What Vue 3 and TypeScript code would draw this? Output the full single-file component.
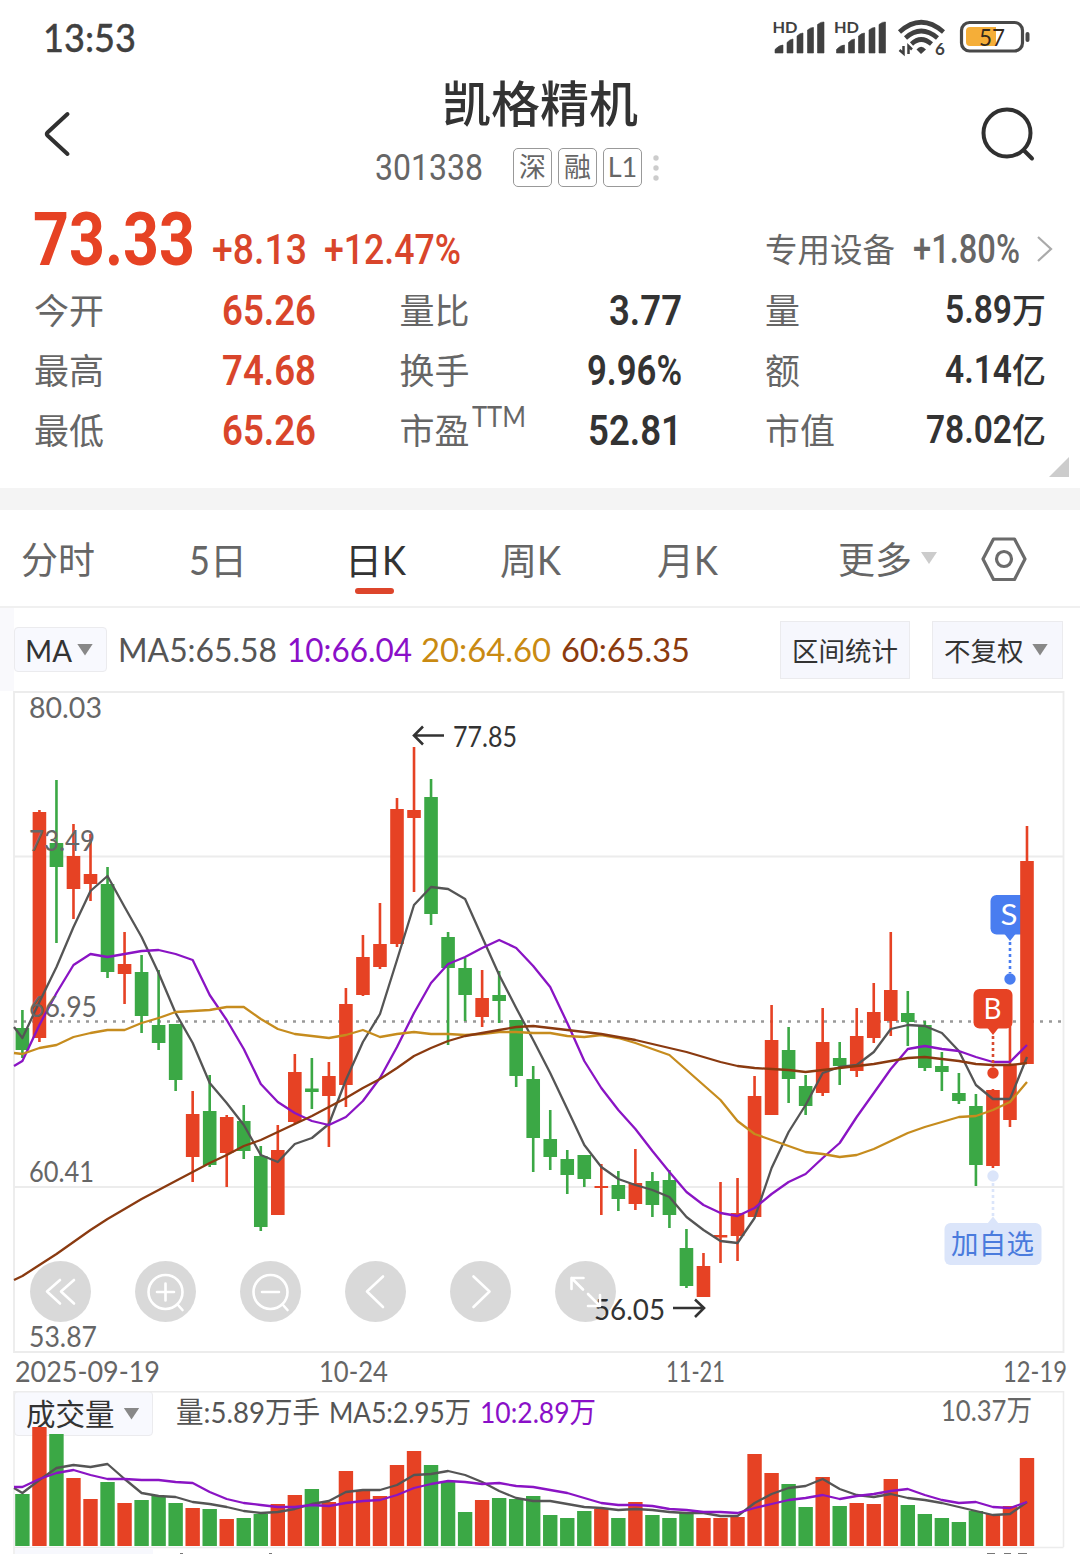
<script setup lang="ts">
type Direction = 'up' | 'down'
type Candle = [dir: Direction, high: number, top: number, bottom: number, low: number]

// Stretches or condenses a run of text to the given width in pixels.
const vFit = {
  mounted(el: HTMLElement, binding: { value: number }) {
    el.style.display = 'inline-block'
    el.style.whiteSpace = 'nowrap'
    const natural = el.getBoundingClientRect().width
    el.style.transformOrigin = '0 50%'
    el.style.transform = `scaleX(${binding.value / natural})`
    el.style.marginRight = `${binding.value - natural}px`
  },
}

const stats = [
  { label: '今开', value: '65.26', w: 94, tone: 'red' },
  { label: '量比', value: '3.77', w: 73, tone: '' },
  { label: '量', value: '5.89', w: 67, unit: '万', tone: 'small' },
  { label: '最高', value: '74.68', w: 94, tone: 'red' },
  { label: '换手', value: '9.96%', w: 95, tone: '' },
  { label: '额', value: '4.14', w: 67, unit: '亿', tone: 'small' },
  { label: '最低', value: '65.26', w: 94, tone: 'red' },
  { label: '市盈', sup: 'TTM', value: '52.81', w: 94, tone: '' },
  { label: '市值', value: '78.02', w: 86, unit: '亿', tone: 'small' },
]

const averages = [
  { text: 'MA5:65.58', w: 159, color: '#555' },
  { text: '10:66.04', w: 125, color: '#8a0fc8' },
  { text: '20:64.60', w: 130, color: '#c98a12' },
  { text: '60:65.35', w: 129, color: '#8b3a0e' },
]

const candles: Candle[] = [
  ['down', 1010, 1028, 1050, 1058], ['up', 810, 812, 1038, 1042], ['down', 780, 843, 867, 943],
  ['up', 824, 856, 889, 919], ['up', 834, 874, 884, 901], ['down', 867, 884, 972, 978],
  ['up', 932, 964, 974, 1004], ['down', 955, 972, 1016, 1033], ['down', 970, 1025, 1043, 1050],
  ['down', 1024, 1024, 1080, 1091], ['up', 1091, 1114, 1157, 1182], ['down', 1075, 1111, 1165, 1167],
  ['up', 1115, 1117, 1153, 1187], ['down', 1105, 1121, 1151, 1159], ['down', 1146, 1156, 1227, 1231],
  ['up', 1125, 1150, 1215, 1215], ['up', 1054, 1072, 1122, 1124], ['down', 1058, 1088.5, 1092, 1109],
  ['up', 1062, 1076, 1096, 1147], ['up', 988, 1004, 1085, 1107], ['up', 935, 957, 995, 996],
  ['up', 903, 944, 967, 969], ['up', 798, 809, 944, 947], ['up', 747, 810, 818, 892],
  ['down', 779, 797, 914, 925], ['down', 932, 937, 968, 1045], ['down', 958, 968, 995, 1021],
  ['up', 970, 998, 1017, 1027], ['down', 971, 995, 1001, 1023], ['down', 1020, 1020, 1076, 1087],
  ['down', 1066, 1079, 1138, 1172], ['down', 1110, 1139, 1157, 1170], ['down', 1150, 1159, 1175, 1194],
  ['down', 1155, 1155, 1179, 1187], ['up', 1164, 1186, 1188, 1215], ['down', 1171, 1185, 1199, 1211],
  ['up', 1149, 1183, 1204, 1210], ['down', 1172, 1181, 1205, 1217], ['down', 1170, 1180, 1215, 1228],
  ['down', 1229, 1248, 1286, 1288], ['up', 1253, 1266, 1297, 1297], ['up', 1182, 1235, 1237.5, 1263],
  ['up', 1178, 1213, 1236, 1261], ['up', 1076, 1096, 1217, 1217], ['up', 1005, 1040, 1115, 1115],
  ['down', 1027, 1050, 1079, 1103], ['down', 1075, 1086, 1106, 1115], ['up', 1008, 1042, 1093, 1096],
  ['down', 1042, 1058, 1066, 1085], ['up', 1008, 1036, 1071, 1077], ['up', 983, 1012, 1038, 1043],
  ['up', 932, 990, 1021, 1036], ['down', 991, 1013, 1022, 1046], ['down', 1021, 1025, 1068, 1071],
  ['down', 1052, 1066, 1072, 1091], ['down', 1073, 1093, 1101, 1104], ['down', 1094, 1106, 1165, 1186],
  ['up', 1089, 1090, 1166, 1168], ['up', 1020, 1065, 1120, 1127], ['up', 826, 861, 1064, 1064],
]

// The first value of every series is its level at the left border of the plot.
const ma5 = [1027, 1038, 1002, 967, 927, 891, 876, 907, 937, 973, 1013, 1043, 1083, 1103, 1125, 1155, 1162, 1144, 1138, 1124, 1080, 1042, 1014, 960, 905, 887, 889, 899, 937, 975, 1008, 1040, 1073, 1109, 1145, 1167, 1179, 1185, 1190, 1197, 1217, 1230, 1241, 1243, 1218, 1168, 1132, 1105, 1073, 1067, 1065, 1052, 1029, 1025, 1026, 1033, 1051, 1085, 1099, 1099, 1057]
const ma10 = [1066, 1061, 1025, 993, 965, 954, 957, 954, 951, 950, 954, 960, 995, 1020, 1049, 1084, 1102, 1113, 1121, 1125, 1117, 1101, 1078, 1047, 1013, 983, 964, 957, 948, 940, 948, 966, 987, 1023, 1061, 1088, 1110, 1129, 1151, 1172, 1192, 1205, 1213, 1216, 1208, 1194, 1182, 1174, 1158, 1143, 1117, 1093, 1069, 1049, 1046, 1049, 1051, 1057, 1062, 1062, 1045]
const ma20 = [1053, 1054, 1048, 1045, 1037, 1033, 1030, 1030, 1023, 1018, 1012, 1011, 1010, 1007, 1007, 1019, 1029, 1034, 1036, 1038, 1035, 1030, 1037, 1034, 1032, 1034, 1034, 1035, 1034, 1032, 1032, 1033, 1033, 1036, 1037, 1035, 1038, 1043, 1049, 1055, 1070, 1085, 1100, 1121, 1134, 1140, 1146, 1152, 1154, 1157, 1155, 1149, 1141, 1133, 1127, 1122, 1117, 1116, 1110, 1102, 1082]
const ma60 = [1280, 1276, 1265, 1254, 1242, 1230, 1219, 1209, 1199, 1190, 1181, 1172, 1163, 1155, 1146, 1140, 1132, 1124, 1116, 1107, 1098, 1088, 1079, 1068, 1056, 1048, 1041, 1036, 1033, 1030, 1027, 1026, 1028, 1030, 1032, 1034, 1037, 1040, 1044, 1048, 1052, 1057, 1062, 1066, 1068, 1069, 1070, 1072, 1070, 1068, 1066, 1064, 1061, 1058, 1057, 1059, 1061, 1064, 1065, 1065, 1063]

const volumes = [1494, 1427, 1434, 1478, 1499, 1482, 1503, 1500, 1496, 1503, 1508, 1509, 1519, 1518, 1514, 1504, 1495, 1489, 1502, 1471, 1490, 1496, 1465, 1451, 1465, 1482, 1512, 1500, 1498, 1499, 1496, 1515, 1518, 1511, 1509, 1518, 1502, 1515, 1518, 1513, 1518, 1518, 1517, 1454, 1473, 1484, 1507, 1477, 1506, 1503, 1504, 1479, 1505, 1514, 1518, 1522, 1511, 1514, 1506, 1458]
const volMa5 = [1488, 1493, 1480, 1468, 1465, 1467, 1464, 1479, 1493, 1496, 1497, 1502, 1504, 1507, 1511, 1513, 1512, 1509, 1504, 1501, 1492, 1490, 1490, 1485, 1475, 1474, 1471, 1475, 1482, 1491, 1498, 1501, 1501, 1504, 1507, 1508, 1510, 1509, 1510, 1512, 1513, 1513, 1516, 1516, 1503, 1494, 1488, 1486, 1479, 1489, 1495, 1497, 1494, 1498, 1500, 1503, 1507, 1511, 1515, 1514, 1502]
const volMa10 = [1487, 1487, 1479, 1473, 1470, 1475, 1479, 1479, 1480, 1480, 1482, 1483, 1492, 1499, 1503, 1505, 1507, 1507, 1505, 1506, 1503, 1501, 1500, 1495, 1488, 1484, 1481, 1482, 1484, 1483, 1486, 1487, 1490, 1493, 1498, 1503, 1505, 1505, 1506, 1509, 1510, 1512, 1512, 1513, 1508, 1504, 1500, 1498, 1495, 1499, 1496, 1494, 1491, 1489, 1495, 1500, 1503, 1502, 1507, 1508, 1502]

const cx = (i: number): number => 22.4 + i * 17.027
const tint = (d: Direction): string => (d === 'up' ? '#e64224' : '#3ba845')
const line = (s: number[]): string => s.map((y, i) => `${i === 0 ? 14 : cx(i - 1).toFixed(1)},${y}`).join(' ')

const priceLines = [
  { points: line(ma5), color: '#555' },
  { points: line(ma10), color: '#8a14c4' },
  { points: line(ma20), color: '#c68c1e' },
  { points: line(ma60), color: '#8a3a10' },
]
const volumeLines = [
  { points: line(volMa5), color: '#555' },
  { points: line(volMa10), color: '#8a14c4' },
]
const axis = [
  { t: '80.03', y: 717.5, w: 73 }, { t: '73.49', y: 850.5, w: 66 }, { t: '66.95', y: 1016.5, w: 68 },
  { t: '60.41', y: 1181.5, w: 65 }, { t: '53.87', y: 1346.5, w: 68 },
]
const lastCandle = candles.length - 1
</script>

<template>
  <div class="screen">
    <header class="status">
      <span v-fit="93" class="clock">13:53</span>
      <svg class="status-icons" width="262" height="46" viewBox="770 12 262 46">
        <g v-for="dx in [0, 61.5]" :key="dx" :transform="`translate(${dx} 0)`" fill="#404040">
          <text x="772.5" y="32.5" font-size="16" font-weight="700" textLength="25" lengthAdjust="spacingAndGlyphs">HD</text>
          <path d="M775 53V49.500Q779 45 783 45V53ZM787 53V42.500Q790 39 793 39V53ZM797 53V36Q800 33 803 33V53ZM807.500 53V30Q811 27 813.500 27.500V53ZM817.500 53V24.500Q821 21.500 824 22V53Z" stroke="#404040" stroke-width=".6" />
        </g>
        <g fill="none" stroke="#404040" stroke-width="4.600">
          <path d="M899.500 32Q921 12.500 943.500 32" />
          <path d="M905.500 38Q921 24 937.500 38" />
          <path d="M911.500 44Q921 35 931.500 44" />
        </g>
        <path d="M916.500 49.500Q921 44 926 49.500L921 54Z" fill="#404040" />
        <path d="M903.500 46v7.500l-4-3.500M908.500 54v-8l3.500 3.500" fill="none" stroke="#404040" stroke-width="2.500" />
        <text x="935" y="55" font-size="17" font-weight="700" fill="#404040">6</text>
        <rect x="961.500" y="22.500" width="61" height="28.500" rx="8" fill="none" stroke="#484848" stroke-width="3.200" />
        <path d="M970 27H996V46H970Q966 46 966 42V31Q966 27 970 27Z" fill="#f5ae38" />
        <rect x="1025.500" y="32" width="4" height="10" rx="2" fill="#484848" />
        <text x="979" y="46" font-size="24" fill="#33291c" textLength="26" lengthAdjust="spacingAndGlyphs">57</text>
      </svg>
    </header>

    <section class="head">
      <svg class="back" width="34" height="50" viewBox="0 0 34 50" fill="none" stroke="#303030" stroke-width="4" stroke-linecap="round" stroke-linejoin="round">
        <path d="M27.500 5L7.500 23.500Q6 25 7.500 26.500L27.500 45" />
      </svg>
      <div class="name">
        <h1>凯格精机</h1>
        <div class="code">
          <span v-fit="108" class="num">301338</span>
          <i v-for="t in ['深', '融', 'L1']" :key="t" class="tag">{{ t }}</i>
          <svg width="6" height="28" viewBox="0 0 6 28" fill="#ccc"><circle cx="3" cy="4" r="2.700" /><circle cx="3" cy="14" r="2.700" /><circle cx="3" cy="24" r="2.700" /></svg>
        </div>
      </div>
      <svg class="search" width="56" height="58" viewBox="0 0 56 58" fill="none" stroke="#303030" stroke-width="4" stroke-linecap="round">
        <circle cx="27" cy="28" r="23.500" /><path d="M44.500 46L52 53.500" />
      </svg>
    </section>

    <section class="quote">
      <div class="price">
        <span v-fit="162" class="num last">73.33</span>
        <span v-fit="95" class="num change">+8.13</span>
        <span v-fit="137" class="num change pct">+12.47%</span>
        <span class="sector">专用设备</span>
        <span v-fit="107" class="num sector-pct">+1.80%</span>
        <svg width="16" height="28" viewBox="0 0 16 28" fill="none" stroke="#aaa" stroke-width="2.200"><path d="M1 2L14 14L1 26" /></svg>
      </div>
      <div class="stats">
        <div v-for="s in stats" :key="s.label" class="stat">
          <span class="label">{{ s.label }}<sup v-if="s.sup" v-fit="54">{{ s.sup }}</sup></span>
          <span class="value" :class="s.tone"><b v-fit="s.w" class="num">{{ s.value }}</b><em v-if="s.unit">{{ s.unit }}</em></span>
        </div>
      </div>
      <i class="corner"></i>
    </section>

    <div class="band"></div>

    <nav class="tabs">
      <span class="t1">分时</span><span class="t2"><b v-fit="21">5</b>日</span><span class="t3 active">日<b v-fit="24">K</b></span>
      <span class="t4">周<b v-fit="24">K</b></span><span class="t5">月<b v-fit="24">K</b></span><span class="t6">更多</span>
      <i class="caret light"></i>
      <svg class="gear" width="46" height="46" viewBox="0 0 46 46" fill="none" stroke="#6b6b6b" stroke-width="3.200" stroke-linejoin="round">
        <path d="M12.500 3H33.500L44 23L33.500 43.500H12.500L2 23Z" /><circle cx="23" cy="23" r="7.500" />
      </svg>
    </nav>

    <section class="tools">
      <div class="pick ma"><span v-fit="47">MA</span><i class="caret"></i></div>
      <div class="avgs"><span v-for="a in averages" :key="a.text" v-fit="a.w" :style="{ color: a.color }">{{ a.text }}</span></div>
      <div class="btn range">区间统计</div>
      <div class="btn adjust">不复权<i class="caret"></i></div>
    </section>

    <section class="chart">
      <svg width="1080" height="662" viewBox="0 691 1080 662">
        <path d="M14 692H1063.500V1352H14ZM14 856.500H1063M14 1187H1063" fill="none" stroke="#ececec" stroke-width="1.800" />
        <path d="M14 1021.500H1063" stroke="#999" stroke-width="2.600" stroke-dasharray="3 6" />

        <g fill="#497df0">
          <rect x="990.500" y="895" width="39" height="39.500" rx="6" />
          <path d="M1004.500 934H1015.500L1010 941Z" /><circle cx="1010" cy="979" r="5.700" />
          <path d="M1010 942V973" stroke="#497df0" stroke-width="2.600" stroke-dasharray="3 3" />
        </g>
        <text x="1000.500" y="925" font-size="29" fill="#fff" textLength="17" lengthAdjust="spacingAndGlyphs">S</text>

        <g v-for="(c, i) in candles" :key="i" :fill="tint(c[0])">
          <rect :x="cx(i) - 1.300" :y="c[1]" width="2.600" :height="c[4] - c[1]" />
          <rect :x="cx(i) - 6.800" :y="c[2]" width="13.600" :height="c[3] - c[2]" />
        </g>
        <polyline v-for="l in priceLines" :key="l.color" :points="l.points" fill="none" :stroke="l.color" stroke-width="2.300" stroke-linejoin="round" />

        <g fill="#e64224">
          <rect x="973.500" y="989" width="39" height="39.500" rx="6" />
          <path d="M987.500 1028H998.500L993 1035Z" /><circle cx="993" cy="1073" r="5.700" />
          <path d="M993 1036V1067" stroke="#d84a30" stroke-width="2.600" stroke-dasharray="3 3" />
        </g>
        <text x="983.500" y="1019" font-size="28.500" fill="#fff" textLength="18" lengthAdjust="spacingAndGlyphs">B</text>

        <g fill="#dbe5fa">
          <circle cx="993" cy="1176" r="5.700" />
          <path d="M993 1183V1217" stroke="#dbe5fa" stroke-width="2.600" stroke-dasharray="3 3" />
          <path d="M987.500 1223.500L993 1216.500L998.500 1223.500Z" /><rect x="944.500" y="1223" width="97" height="42" rx="6" />
        </g>
        <text x="951" y="1253.500" font-size="27.500" fill="#4a7bdd" textLength="83">加自选</text>

        <g font-size="28.500" fill="#666">
          <text v-for="a in axis" :key="a.t" x="29" :y="a.y" :textLength="a.w" lengthAdjust="spacingAndGlyphs">{{ a.t }}</text>
        </g>
        <g font-size="28.500" fill="#333">
          <text x="453" y="746.500" textLength="64" lengthAdjust="spacingAndGlyphs">77.85</text>
          <text x="594" y="1319.500" textLength="71" lengthAdjust="spacingAndGlyphs">56.05</text>
        </g>
        <path d="M444 735.500H414M423 726.500L414 735.500L423 744.500M673 1308H704M695 1299.500L704 1308L695 1317" fill="none" stroke="#333" stroke-width="2.600" />

        <circle v-for="n in 6" :key="n" :cx="60.500 + (n - 1) * 105" cy="1291.500" r="30.500" fill="#000" fill-opacity=".15" />
        <g fill="none" stroke="#fff" stroke-width="2.600" stroke-linecap="round" stroke-linejoin="round">
          <path d="M60 1280L47 1291.500L60 1303.500M74 1280L61 1291.500L74 1303.500" />
          <circle cx="165.500" cy="1292" r="17" /><path d="M157 1292H174M165.500 1283.500V1300.500M178 1305L182.500 1310" />
          <circle cx="270.500" cy="1292" r="17" /><path d="M262 1292H279M283 1305L287.500 1310" />
          <path d="M383 1276.500L367 1291.500L383 1307M473.500 1276.500L489.500 1291.500L473.500 1307" />
          <path d="M583.500 1278H571.500V1289M571.500 1278L583 1289.500M588 1294L599.500 1305.500M588 1306H600V1295" />
        </g>
      </svg>
    </section>

    <div class="dates"><span v-fit="145">2025-09-19</span><span v-fit="69">10-24</span><span v-fit="59">11-21</span><span v-fit="64">12-19</span></div>

    <section class="volume">
      <div class="vol-head">
        <div class="pick vol">成交量<i class="caret"></i></div>
        <span v-fit="144">量:5.89万手</span><span v-fit="142">MA5:2.95万</span><span v-fit="116" class="purple">10:2.89万</span>
        <span v-fit="91" class="max">10.37万</span>
      </div>
      <svg class="bars" width="1080" height="163" viewBox="0 1391 1080 163">
        <path d="M14 1391V1554M14 1391.700H1063.500V1547M14 1547.500H1063.500" fill="none" stroke="#ececec" stroke-width="1.500" />
        <path d="M15 1548.500H153V1554H15Z" fill="#f7f8fd" />
        <path d="M180 1553.500h3M269 1553.500h3M987 1553.500h8M1004 1553.500h7M1018 1553.500h9" stroke="#777" stroke-width="1" />
        <rect v-for="(v, i) in volumes" :key="i" :x="Math.max(14, cx(i) - 7.200)" :y="v" width="14.400" :height="1546 - v" :fill="tint(i === lastCandle ? 'up' : candles[i][0])" />
        <polyline v-for="l in volumeLines" :key="l.color" :points="l.points" fill="none" :stroke="l.color" stroke-width="2.300" stroke-linejoin="round" />
      </svg>
    </section>
  </div>
</template>

<style>
body { margin: 0; background: #fff; }
</style>

<style scoped>
* { box-sizing: border-box; }
.screen { width: 1080px; height: 1554px; overflow: hidden; background: #fff; color: #666; font-family: Lato, "Noto Sans CJK SC", sans-serif; display: flex; flex-direction: column; }
.screen > * { flex: none; }
i, em { font-style: normal; }
b { font-weight: 400; }
.num { font-family: Roboto, "Noto Sans CJK SC", sans-serif; }

.status { height: 76px; padding: 0 48px 0 43px; display: flex; justify-content: space-between; }
.clock { height: 76px; line-height: 75px; font-size: 39px; font-weight: 500; color: #404040; -webkit-text-stroke: .3px #404040; }
.status-icons { margin-top: 12px; font-family: Lato, sans-serif; overflow: visible; }

.head { height: 120px; display: grid; grid-template-columns: 34px 1fr 56px; padding: 0 44px 0 40px; }
.back { margin-top: 33px; }
.search { margin-top: 29px; }
.name { display: flex; flex-direction: column; align-items: center; padding-left: 26px; }
h1 { margin: 0; font-size: 49px; line-height: 55px; height: 72px; font-weight: 500; color: #333; white-space: nowrap; }
.code { display: flex; align-items: center; height: 39px; gap: 6px; margin-left: -22px; font-size: 37px; line-height: 39px; }
.code .num { position: relative; left: -24px; }
.tag { width: 39px; height: 39px; border: 1.500px solid #999; border-radius: 5px; font-size: 27px; line-height: 35px; text-align: center; }
.code svg { margin-left: 5px; }

.quote { height: 292px; position: relative; }
.price { display: flex; height: 84px; align-items: flex-start; padding-left: 33px; }
.num.last { font-size: 75px; line-height: 86px; font-weight: 700; color: #e64224; }
.num.change { font-size: 42px; line-height: 50px; margin-top: 29px; font-weight: 500; color: #d9452b; }
.price .change { margin-left: 17px; }
.sector { margin-left: auto; font-size: 32.500px; line-height: 40px; margin-top: 34px; }
.num.sector-pct { font-size: 40px; line-height: 50px; margin-top: 29px; font-weight: 500; margin-left: 18px; }
.price svg { margin: 39px 27px 0 17px; }
.stats { display: grid; grid-template-columns: 282px 282px 282px; column-gap: 83.500px; grid-auto-rows: 60px; padding-left: 34px; }
.stat { display: flex; justify-content: space-between; align-items: center; }
.label { font-size: 35px; line-height: 60px; height: 60px; position: relative; }
.label sup { position: absolute; left: 72px; top: -12px; font-size: 28px; line-height: 56px; vertical-align: baseline; }
.value { display: flex; align-items: center; color: #333; font-size: 42px; height: 60px; line-height: 60px; padding-top: 2px; }
.value b { font-weight: 600; }
.value.red { color: #d9452b; }
.value.small { font-size: 39px; padding: 0 1px 1px 0; }
.value em { font-size: 34px; font-weight: 500; }
.corner { position: absolute; right: 11px; bottom: 11px; width: 20px; height: 20px; background: #ccc; clip-path: polygon(100% 0, 100% 100%, 0 100%); }

.band { height: 22px; background: #f4f4f4; }

.tabs { height: 98px; border-bottom: 2px solid #f0f0f0; display: flex; align-items: center; font-size: 37px; line-height: 100px; padding-left: 21px; }
.tabs span { height: 96px; position: relative; white-space: nowrap; }
.tabs b { font-size: 40px; }
.t1 { width: 168px; }
.t2 { width: 156px; }
.t3 { width: 155px; }
.t4 { width: 157px; }
.t5 { width: 181px; }
.t6 { width: 83px; }
.active { color: #333; }
.active::after { content: ""; position: absolute; left: 10px; top: 78px; width: 39px; height: 6px; border-radius: 3px; background: #dd452b; }
.caret { width: 16px; height: 12px; background: #888; clip-path: polygon(0 0, 100% 0, 50% 100%); display: block; }
.caret.light { background: #ccc; }
.gear { margin-left: 44px; position: relative; top: 1px; }

.tools { height: 83px; display: flex; align-items: center; border-left: 14px solid #f9f9fc; padding-right: 17px; }
.pick { background: #f8f9fe; border: 1px solid #ebebee; border-radius: 4px; color: #333; display: flex; align-items: center; }
.ma { width: 93px; height: 45px; font-size: 31px; padding-left: 10px; gap: 5px; }
.avgs { display: flex; margin-left: 11px; gap: 9.500px; font-size: 32.500px; line-height: 44px; }
.btn { height: 58px; background: #f6f7fd; border: 1px solid #ebebee; color: #333; font-size: 26.500px; display: flex; align-items: center; }
.range { width: 130px; margin-left: auto; padding-left: 11px; }
.adjust { width: 131px; margin-left: 22px; padding-left: 11px; gap: 8.500px; }

.chart { height: 662px; }
.chart svg { display: block; overflow: visible; font-family: Lato, "Noto Sans CJK SC", sans-serif; }
.dates { height: 38px; font-size: 28.500px; line-height: 36px; display: grid; grid-template-columns: 304px 347px 337px 80px; padding-left: 15px; justify-items: start; }

.volume { height: 163px; position: relative; }
.vol-head { display: flex; align-items: center; height: 42px; padding: 0 48px 0 14px; font-size: 29px; color: #555; line-height: 40px; }
.vol { width: 139px; height: 45px; margin: 3px 23px 0 0; padding-left: 11px; gap: 9px; font-size: 29.500px; }
.vol-head > span + span { margin-left: 9px; }
.purple { color: #8a0fc8; }
.vol-head > span.max { margin-left: auto; margin-bottom: 4px; color: #666; }
.bars { position: absolute; left: 0; top: 0; }
</style>
